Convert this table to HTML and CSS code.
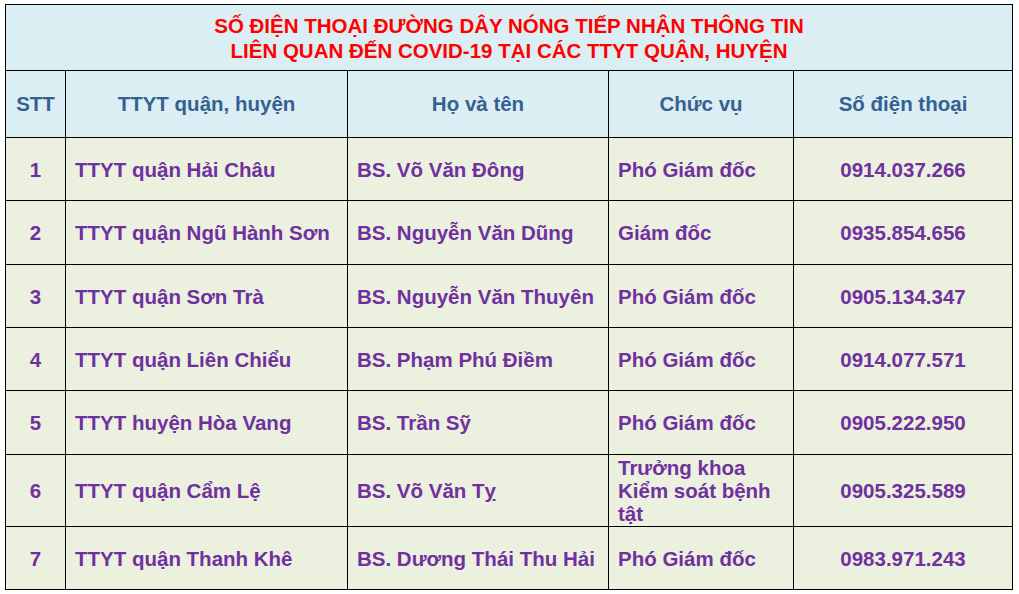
FILE: index.html
```html
<!DOCTYPE html>
<html lang="vi">
<head>
<meta charset="utf-8">
<title>Đường dây nóng COVID-19</title>
<link rel="stylesheet" href="styles.css">
</head>
<body>
<table class="hotline">
  <colgroup>
    <col class="c-stt">
    <col class="c-unit">
    <col class="c-name">
    <col class="c-role">
    <col class="c-phone">
  </colgroup>
  <thead>
    <tr class="title-row">
      <th colspan="5" class="title">SỐ ĐIỆN THOẠI ĐƯỜNG DÂY NÓNG TIẾP NHẬN THÔNG TIN<br>LIÊN QUAN ĐẾN COVID-19 TẠI CÁC TTYT QUẬN, HUYỆN</th>
    </tr>
    <tr class="head-row">
      <th>STT</th>
      <th>TTYT quận, huyện</th>
      <th>Họ và tên</th>
      <th>Chức vụ</th>
      <th>Số điện thoại</th>
    </tr>
  </thead>
  <tbody>
    <tr class="row">
      <td class="num">1</td><td>TTYT quận Hải Châu</td><td>BS. Võ Văn Đông</td><td>Phó Giám đốc</td><td class="num">0914.037.266</td>
    </tr>
    <tr class="row plus">
      <td class="num">2</td><td>TTYT quận Ngũ Hành Sơn</td><td>BS. Nguyễn Văn Dũng</td><td>Giám đốc</td><td class="num">0935.854.656</td>
    </tr>
    <tr class="row">
      <td class="num">3</td><td>TTYT quận Sơn Trà</td><td>BS. Nguyễn Văn Thuyên</td><td>Phó Giám đốc</td><td class="num">0905.134.347</td>
    </tr>
    <tr class="row">
      <td class="num">4</td><td>TTYT quận Liên Chiểu</td><td>BS. Phạm Phú Điềm</td><td>Phó Giám đốc</td><td class="num">0914.077.571</td>
    </tr>
    <tr class="row plus">
      <td class="num">5</td><td>TTYT huyện Hòa Vang</td><td>BS. Trần Sỹ</td><td>Phó Giám đốc</td><td class="num">0905.222.950</td>
    </tr>
    <tr class="row tall">
      <td class="num">6</td><td>TTYT quận Cẩm Lệ</td><td>BS. Võ Văn Tỵ</td><td class="multi">Trưởng khoa<br>Kiểm soát bệnh<br>tật</td><td class="num">0905.325.589</td>
    </tr>
    <tr class="row">
      <td class="num">7</td><td>TTYT quận Thanh Khê</td><td>BS. Dương Thái Thu Hải</td><td>Phó Giám đốc</td><td class="num">0983.971.243</td>
    </tr>
  </tbody>
</table>
</body>
</html>
```
FILE: styles.css
```css
html, body {
  margin: 0;
  background: #ffffff;
}
body {
  padding: 4px 0 0 5px;
  font-family: "Liberation Sans", Arial, sans-serif;
}
.hotline {
  border-collapse: collapse;
  table-layout: fixed;
  width: 1007px;
  font-weight: bold;
}
.c-stt { width: 60px; }
.c-unit { width: 282px; }
.c-name { width: 261px; }
.c-role { width: 185px; }
.c-phone { width: 219px; }

.hotline th, .hotline td {
  border: 1px solid #000;
  padding: 0 0 0 9px;
  vertical-align: middle;
}
.title-row { height: 66px; }
.title {
  background: #daeef3;
  color: #ff0000;
  font-size: 20.5px;
  line-height: 25px;
  text-align: center;
  padding: 0 !important;
}
.head-row { height: 67px; }
.head-row th {
  background: #daeef3;
  color: #376092;
  font-size: 20.5px;
  text-align: center;
  padding: 0;
}
.row { height: 63px; }
.row.plus { height: 64px; }
.row.tall { height: 72px; }
.row td {
  background: #ebf1de;
  color: #7030a0;
  font-size: 20.5px;
  line-height: 23px;
  white-space: nowrap;
}
.row td.num {
  text-align: center;
  padding: 0;
}
.row td.multi {
  line-height: 23px;
}
```
